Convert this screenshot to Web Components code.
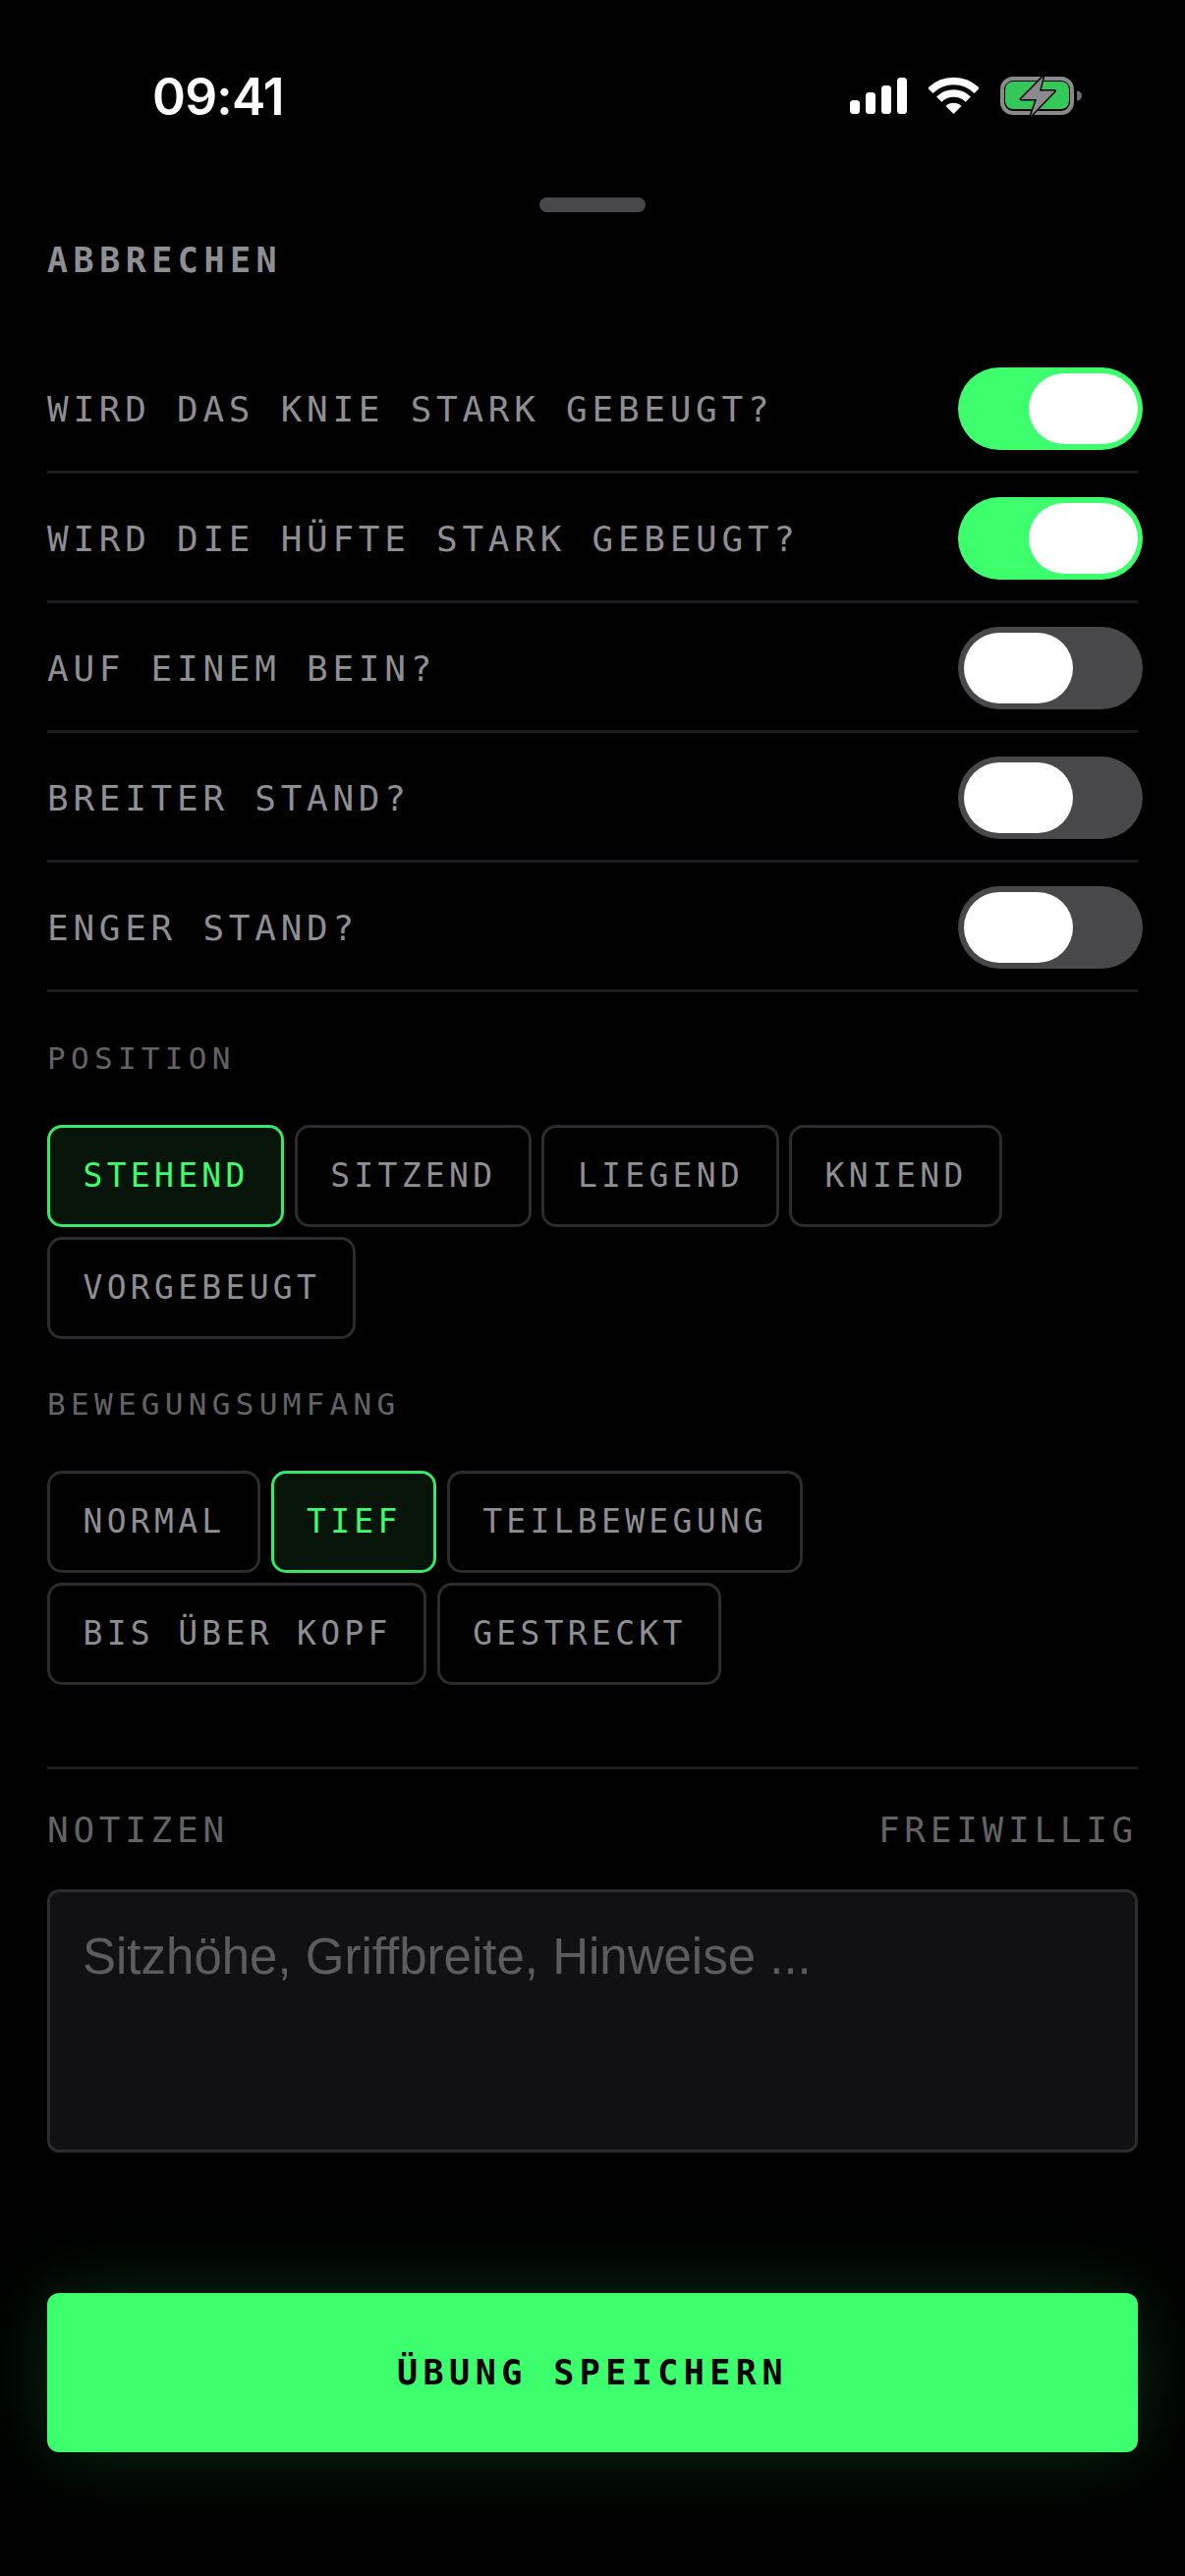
<!DOCTYPE html>
<html lang="de">
<head>
<meta charset="utf-8">
<title>Übung</title>
<style>
    html, body { margin: 0; padding: 0; background: #000; }
    body { font-family: "DejaVu Sans Mono", monospace; }
</style>
</head>
<body>
<exercise-sheet>
    <status-bar slot="status"></status-bar>
    <sheet-header slot="header">ABBRECHEN</sheet-header>

    <toggle-row checked>WIRD DAS KNIE STARK GEBEUGT?</toggle-row>
    <toggle-row checked>WIRD DIE HÜFTE STARK GEBEUGT?</toggle-row>
    <toggle-row>AUF EINEM BEIN?</toggle-row>
    <toggle-row>BREITER STAND?</toggle-row>
    <toggle-row>ENGER STAND?</toggle-row>

    <chip-group label="POSITION" style="margin-top: 1px">
        <option-chip selected>STEHEND</option-chip>
        <option-chip>SITZEND</option-chip>
        <option-chip>LIEGEND</option-chip>
        <option-chip>KNIEND</option-chip>
        <option-chip>VORGEBEUGT</option-chip>
    </chip-group>

    <chip-group label="BEWEGUNGSUMFANG">
        <option-chip>NORMAL</option-chip>
        <option-chip selected>TIEF</option-chip>
        <option-chip>TEILBEWEGUNG</option-chip>
        <option-chip>BIS ÜBER KOPF</option-chip>
        <option-chip>GESTRECKT</option-chip>
    </chip-group>

    <notes-field placeholder="Sitzhöhe, Griffbreite, Hinweise ..."></notes-field>
    <save-button>ÜBUNG SPEICHERN</save-button>
</exercise-sheet>

<script>
class ExerciseSheet extends HTMLElement {
    constructor() {
        super();
        this.attachShadow({ mode: 'open' });
    }

    connectedCallback() {
        this.shadowRoot.innerHTML = `
            <style>
                :host {
                    display: block;
                    width: 1206px;
                    height: 2622px;
                    background: #000;
                    overflow: hidden;
                    font-family: "DejaVu Sans Mono", monospace;
                }
                .content {
                    display: flex;
                    flex-direction: column;
                    padding: 0 48px;
                }
            </style>
            <slot name="status"></slot>
            <div class="content">
                <slot name="header"></slot>
                <slot></slot>
            </div>
        `;
    }
}

class StatusBar extends HTMLElement {
    constructor() {
        super();
        this.attachShadow({ mode: 'open' });
    }

    connectedCallback() {
        this.shadowRoot.innerHTML = `
            <style>
                :host {
                    display: block;
                    height: 216px;
                }
                .bar {
                    display: flex;
                    justify-content: space-between;
                    align-items: flex-start;
                    padding: 77px 104px 0 155px;
                }
                .time {
                    font: 600 51.5px/42px Inter, sans-serif;
                    letter-spacing: -0.8px;
                    color: #fff;
                }
                .icons {
                    display: flex;
                    align-items: flex-start;
                    gap: 22px;
                }
                svg { display: block; }
                .handle {
                    width: 108px;
                    height: 15px;
                    margin: 82px auto 0;
                    border-radius: 7.5px;
                    background: #48484a;
                }
            </style>
            <div class="bar">
                <span class="time">09:41</span>
                <div class="icons">
                    <svg width="58" height="42" viewBox="0 0 58 42">
                        <rect x="0" y="25" width="10" height="14" rx="3.5" fill="#fff"/>
                        <rect x="16" y="17" width="10" height="22" rx="3.5" fill="#fff"/>
                        <rect x="32" y="10" width="10" height="29" rx="3.5" fill="#fff"/>
                        <rect x="48" y="2" width="10" height="37" rx="3.5" fill="#fff"/>
                    </svg>
                    <svg width="51" height="42" viewBox="0 -2 51 42">
                        <path d="M1.8 13.3A33.5 33.5 0 0 1 49.2 13.3" fill="none" stroke="#fff" stroke-width="7.5"/>
                        <path d="M10.7 22.2A21 21 0 0 1 40.3 22.2" fill="none" stroke="#fff" stroke-width="7.5"/>
                        <path d="M25.5 37L17.5 29A11.3 11.3 0 0 1 33.5 29Z" fill="#fff"/>
                    </svg>
                    <svg width="84" height="42" viewBox="0 0 84 42">
                        <rect x="2" y="3" width="71" height="35" rx="11" fill="none" stroke="#8a8a8e" stroke-width="4"/>
                        <rect x="5" y="6" width="65" height="28" rx="8" fill="#34c759"/>
                        <path d="M78 15.5A5 5 0 0 1 78 25.5Z" fill="#6e6e72"/>
                        <path d="M43.7 1L21 24H37L31 41L55.5 15.5H40Z" fill="#8a8a8e" stroke="#000" stroke-width="3" stroke-linejoin="round" paint-order="stroke"/>
                    </svg>
                </div>
            </div>
            <div class="handle"></div>
        `;
    }
}

class SheetHeader extends HTMLElement {
    constructor() {
        super();
        this.attachShadow({ mode: 'open' });
    }

    connectedCallback() {
        this.shadowRoot.innerHTML = `
            <style>
                :host {
                    display: block;
                    height: 134px;
                    padding-top: 27px;
                    box-sizing: border-box;
                    font-size: 35px;
                    line-height: 44px;
                    font-weight: 700;
                    letter-spacing: 5.5px;
                    color: #8e8e93;
                }
            </style>
            <slot></slot>
        `;
    }
}

class ToggleRow extends HTMLElement {
    constructor() {
        super();
        this.attachShadow({ mode: 'open' });
    }

    connectedCallback() {
        const on = this.hasAttribute('checked');
        this.shadowRoot.innerHTML = `
            <style>
                :host {
                    display: flex;
                    align-items: center;
                    justify-content: space-between;
                    padding: 24px 0 21px;
                    border-bottom: 3px solid #1c1c1e;
                    font-size: 36px;
                    letter-spacing: 4.73px;
                    color: #8e8e93;
                }
                .track {
                    display: flex;
                    justify-content: ${on ? 'flex-end' : 'flex-start'};
                    align-items: center;
                    flex: none;
                    box-sizing: border-box;
                    width: 188px;
                    height: 84px;
                    margin-right: -5px;
                    padding: 0 5px 0 6px;
                    border-radius: 42px;
                    background: ${on ? '#3dff6e' : '#48484a'};
                }
                .thumb {
                    width: 111px;
                    height: 72px;
                    border-radius: 36px;
                    background: #fff;
                }
            </style>
            <span class="label"><slot></slot></span>
            <div class="track"><div class="thumb"></div></div>
        `;
    }
}

class ChipGroup extends HTMLElement {
    constructor() {
        super();
        this.attachShadow({ mode: 'open' });
    }

    connectedCallback() {
        this.shadowRoot.innerHTML = `
            <style>
                :host {
                    display: block;
                    padding-top: 47px;
                }
                .label {
                    font-size: 31px;
                    line-height: 38px;
                    letter-spacing: 5.3px;
                    color: #636366;
                    margin-bottom: 49px;
                }
                .chips {
                    display: flex;
                    flex-wrap: wrap;
                    gap: 10px 10.5px;
                }
            </style>
            <div class="label">${this.getAttribute('label')}</div>
            <div class="chips"><slot></slot></div>
        `;
    }
}

class OptionChip extends HTMLElement {
    constructor() {
        super();
        this.attachShadow({ mode: 'open' });
    }

    connectedCallback() {
        this.shadowRoot.innerHTML = `
            <style>
                :host {
                    display: block;
                    box-sizing: border-box;
                    height: 104px;
                    padding: 0 32.5px 0 33.5px;
                    border: 3px solid #2c2c2e;
                    border-radius: 15px;
                    font-size: 33px;
                    line-height: 98px;
                    letter-spacing: 4.3px;
                    white-space: nowrap;
                    color: #8e8e93;
                }
                :host([selected]) {
                    border-color: #3ae66a;
                    background: #06140a;
                    color: #3dff6e;
                }
            </style>
            <slot></slot>
        `;
    }
}

class NotesField extends HTMLElement {
    constructor() {
        super();
        this.attachShadow({ mode: 'open' });
    }

    connectedCallback() {
        this.shadowRoot.innerHTML = `
            <style>
                :host {
                    display: block;
                    margin-top: 83px;
                    padding-top: 40px;
                    border-top: 3px solid #1c1c1e;
                }
                .head {
                    display: flex;
                    justify-content: space-between;
                    font-size: 36px;
                    line-height: 44px;
                    letter-spacing: 4.73px;
                    color: #636366;
                }
                .box {
                    box-sizing: border-box;
                    height: 268px;
                    margin-top: 38px;
                    padding: 36px 33px 0;
                    border: 3px solid #2c2c2e;
                    border-radius: 12px;
                    background: #111113;
                    font: 51px/60px "Liberation Sans", sans-serif;
                    color: #5c5c5f;
                }
            </style>
            <div class="head"><span>NOTIZEN</span><span>FREIWILLIG</span></div>
            <div class="box">${this.getAttribute('placeholder')}</div>
        `;
    }
}

class SaveButton extends HTMLElement {
    constructor() {
        super();
        this.attachShadow({ mode: 'open' });
    }

    connectedCallback() {
        this.shadowRoot.innerHTML = `
            <style>
                :host {
                    display: block;
                    box-sizing: border-box;
                    height: 162px;
                    margin-top: 143px;
                    border-radius: 12px;
                    background: #3dff6e;
                    box-shadow: 0 0 80px rgba(61, 255, 110, 0.18);
                    font-size: 35px;
                    font-weight: 700;
                    line-height: 162px;
                    letter-spacing: 5.45px;
                    text-align: center;
                    color: #000;
                }
            </style>
            <slot></slot>
        `;
    }
}

customElements.define('exercise-sheet', ExerciseSheet);
customElements.define('status-bar', StatusBar);
customElements.define('sheet-header', SheetHeader);
customElements.define('toggle-row', ToggleRow);
customElements.define('chip-group', ChipGroup);
customElements.define('option-chip', OptionChip);
customElements.define('notes-field', NotesField);
customElements.define('save-button', SaveButton);
</script>
</body>
</html>
